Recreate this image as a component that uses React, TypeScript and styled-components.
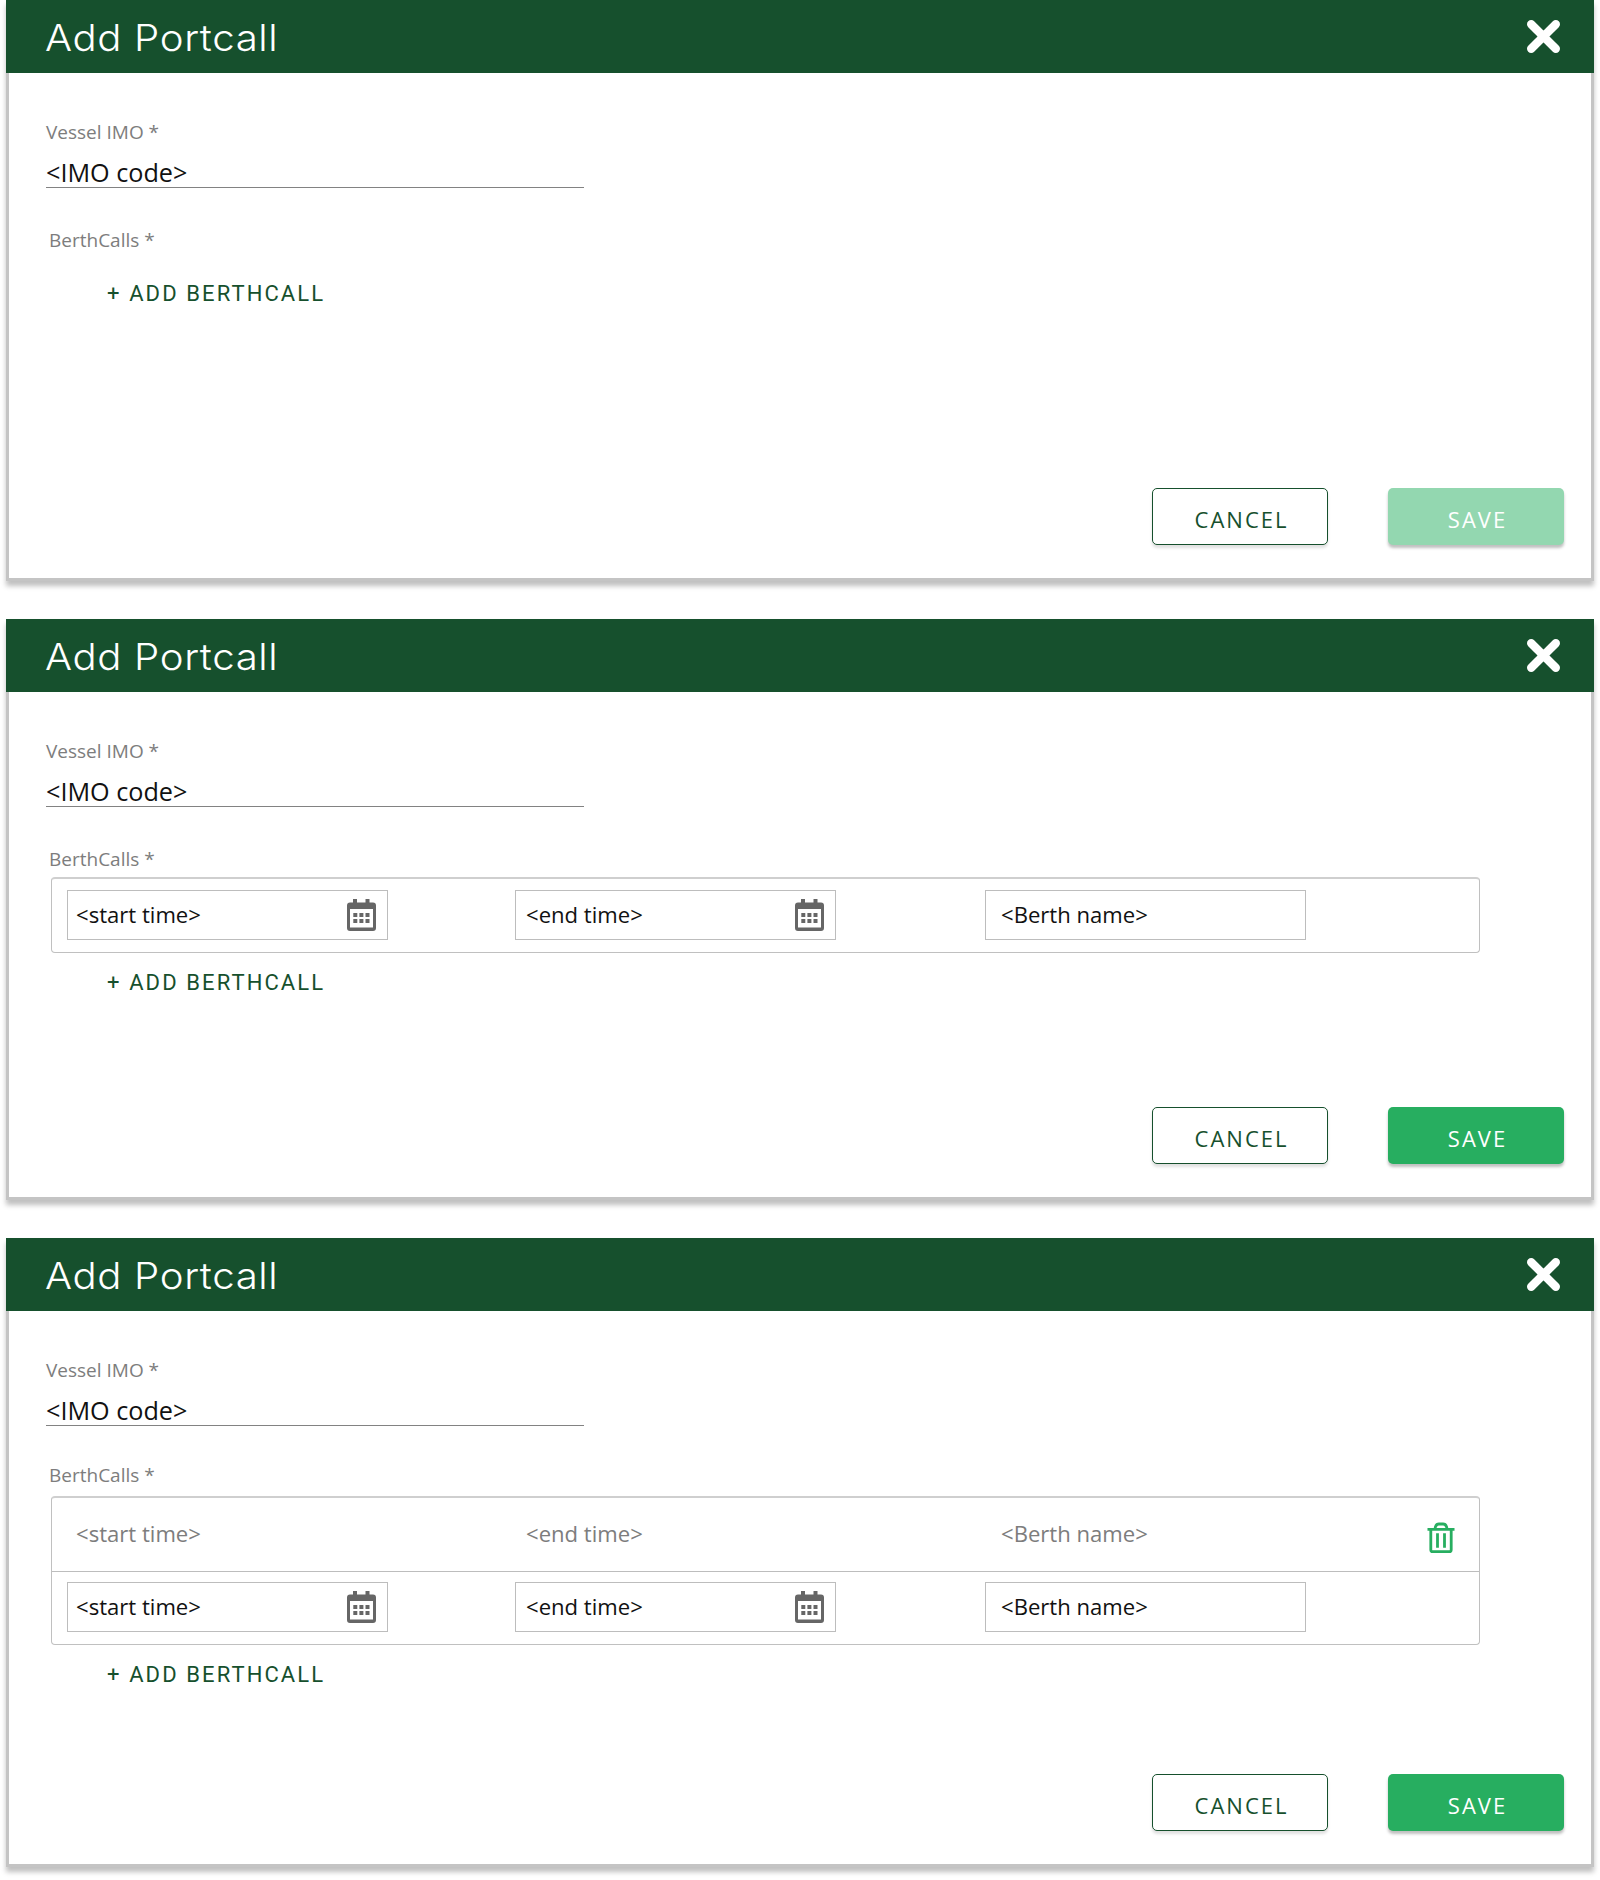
import React from 'react';
import styled, { createGlobalStyle } from 'styled-components';

const GlobalStyle = createGlobalStyle`
  * { box-sizing: border-box; }
  body { margin: 0; background: #fff; font-family: "Open Sans", "Noto Sans", sans-serif; }
  button { font: inherit; margin: 0; }
`;

const Page = styled.main`
  width: 1600px;
  height: 1880px;
  padding: 0 6px;
  display: flex;
  flex-direction: column;
  gap: 38px;
  overflow: hidden;
`;

const Dialog = styled.section<{ $height: number }>`
  flex: none;
  height: ${p => p.$height}px;
  display: flex;
  flex-direction: column;
  box-shadow: 0 5px 5px rgba(0, 0, 0, 0.25);
`;

const Header = styled.header`
  flex: none;
  height: 73px;
  padding: 0 33px 0 39px;
  display: flex;
  align-items: center;
  justify-content: space-between;
  background: #16502d;
`;

const Title = styled.h1`
  margin: 0;
  padding-top: 2px;
  color: #fff;
  font: 300 37px/71px Inter, sans-serif;
  letter-spacing: 0.6px;
  transform: scaleX(1.085);
  transform-origin: left center;
`;

const CloseButton = styled.button`
  padding: 0;
  border: 0;
  background: none;
  display: flex;
`;

const Body = styled.div`
  flex: 1;
  display: flex;
  flex-direction: column;
  align-items: flex-start;
  padding: 46px 27px 33px 37px;
  background: #fff;
  border: solid #c4c4c4;
  border-width: 0 3px 3px;
`;

const Label = styled.label<{ $indent?: boolean }>`
  font-size: 19px;
  line-height: 26px;
  color: #7d7d7d;
  margin-left: ${p => (p.$indent ? 3 : 0)}px;
`;

const ImoValue = styled.div`
  width: 538px;
  height: 43px;
  padding-top: 10px;
  border-bottom: 1.5px solid #828282;
  font-size: 25.2px;
  line-height: 34px;
  color: #111;
`;

const BerthSection = styled.div<{ $top: number }>`
  margin-top: ${p => p.$top}px;
  display: flex;
  flex-direction: column;
  align-items: flex-start;
`;

const BerthTable = styled.div<{ $top: number }>`
  width: 1429px;
  margin: ${p => p.$top}px 0 0 5px;
  border: 1px solid #c0c0c0;
  border-top: 2px solid #cfcfcf;
  border-radius: 4px;
`;

const BerthRow = styled.div`
  height: 73px;
  display: grid;
  grid-template-columns: 448px 470px 321px 1fr;
  align-items: center;
  padding: 0 24px 1px 15px;

  & + & {
    padding-bottom: 2px;
    border-top: 1px solid #bdbdbd;
  }
`;

const Cell = styled.div<{ $editable: boolean; $inset?: number }>`
  width: 321px;
  height: 50px;
  padding: 0 11px 2px ${p => p.$inset ?? 8}px;
  display: flex;
  align-items: center;
  justify-content: space-between;
  border: 1px solid ${p => (p.$editable ? '#bdbdbd' : 'transparent')};
  color: ${p => (p.$editable ? '#111' : '#7d7d7d')};
  font-size: 22.1px;
  line-height: 30px;

  svg { margin-top: 2px; }
`;

const DeleteButton = styled.button`
  justify-self: end;
  padding: 8px 0 0;
  border: 0;
  background: none;
  display: flex;
`;

const AddButton = styled.button<{ $top: number }>`
  margin: ${p => p.$top}px 0 0 61px;
  padding: 0;
  border: 0;
  background: none;
  color: #16502d;
  font: 400 22px/26px Roboto, sans-serif;
  letter-spacing: 2.1px;
  white-space: pre;
`;

const Actions = styled.footer`
  margin-top: auto;
  align-self: flex-end;
  display: flex;
  gap: 60px;
`;

const ActionButton = styled.button<{ $kind: 'outline' | 'solid' | 'disabled' }>`
  width: 176px;
  height: 57px;
  padding: 5px 0 0 3px;
  border-radius: 5px;
  border: ${p => (p.$kind === 'outline' ? '1.5px solid #16502d' : '0')};
  background: ${p => ({ outline: '#fff', solid: '#27ae60', disabled: '#93d7b0' })[p.$kind]};
  color: ${p => (p.$kind === 'outline' ? '#16502d' : '#fff')};
  box-shadow: 0 3px 3px rgba(0, 0, 0, ${p => (p.$kind === 'outline' ? 0.12 : 0.25)});
  font-size: 22px;
  line-height: 30px;
  letter-spacing: 2px;
`;

const CloseIcon = () => (
  <svg width="35" height="35" viewBox="0 0 35 35">
    <path d="M5.200 5.200 29.800 29.800M29.800 5.200 5.200 29.800" stroke="#fff" strokeWidth="8.4" strokeLinecap="round" />
  </svg>
);

const CalendarIcon = () => (
  <svg width="29" height="32" viewBox="0 0 29 32" fill="#666">
    <path
      fillRule="evenodd"
      d="M6 0h4v3.500h8.500V0h4v3.500H26a3 3 0 0 1 3 3V29a3 3 0 0 1-3 3H3a3 3 0 0 1-3-3V6.500a3 3 0 0 1 3-3h3zM3 10v18.500h23V10z"
    />
    {[14, 20].map(y => [6.3, 12.4, 18.5].map(x => <rect key={`${x}-${y}`} x={x} y={y} width="4" height="4" />))}
  </svg>
);

const TrashIcon = () => (
  <svg width="28" height="32" viewBox="0 0 28 32" fill="none" stroke="#27ae60" strokeWidth="2.8">
    <path d="M.5 7.300h27M3.800 7.300V27.700a2 2 0 0 0 2 2h16.400a2 2 0 0 0 2-2V7.300" />
    <path d="M8 7c.3-3.300 1.800-5 4-5h4c2.200 0 3.700 1.700 4 5M10.500 11.300v14.400M17.500 11.300v14.400" />
  </svg>
);

type RowMode = 'saved' | 'editing';

const BerthCall = ({ mode }: { mode: RowMode }) => {
  const editable = mode === 'editing';
  return (
    <BerthRow>
      <Cell $editable={editable}>&lt;start time&gt;{editable && <CalendarIcon />}</Cell>
      <Cell $editable={editable} $inset={10}>&lt;end time&gt;{editable && <CalendarIcon />}</Cell>
      <Cell $editable={editable} $inset={15}>&lt;Berth name&gt;</Cell>
      {!editable && <DeleteButton aria-label="Delete"><TrashIcon /></DeleteButton>}
    </BerthRow>
  );
};

interface PortcallProps {
  height: number;
  rows: RowMode[];
  sectionTop: number;
  tableTop?: number;
  addTop: number;
}

const PortcallDialog = ({ height, rows, sectionTop, tableTop = 0, addTop }: PortcallProps) => (
  <Dialog $height={height}>
    <Header>
      <Title>Add Portcall</Title>
      <CloseButton aria-label="Close"><CloseIcon /></CloseButton>
    </Header>
    <Body>
      <Label>Vessel IMO *</Label>
      <ImoValue>&lt;IMO code&gt;</ImoValue>
      <BerthSection $top={sectionTop}>
        <Label $indent>BerthCalls *</Label>
        {rows.length > 0 && (
          <BerthTable $top={tableTop}>
            {rows.map((mode, i) => <BerthCall key={i} mode={mode} />)}
          </BerthTable>
        )}
        <AddButton $top={addTop}>+ ADD BERTHCALL</AddButton>
      </BerthSection>
      <Actions>
        <ActionButton $kind="outline">CANCEL</ActionButton>
        <ActionButton $kind={rows.length ? 'solid' : 'disabled'}>SAVE</ActionButton>
      </Actions>
    </Body>
  </Dialog>
);

export default function App() {
  return (
    <>
      <GlobalStyle />
      <Page>
        <PortcallDialog height={581} rows={[]} sectionTop={39} addTop={28} />
        <PortcallDialog height={581} rows={['editing']} sectionTop={39} tableTop={5} addTop={17} />
        <PortcallDialog height={629} rows={['saved', 'editing']} sectionTop={36} tableTop={8} addTop={17} />
      </Page>
    </>
  );
}
